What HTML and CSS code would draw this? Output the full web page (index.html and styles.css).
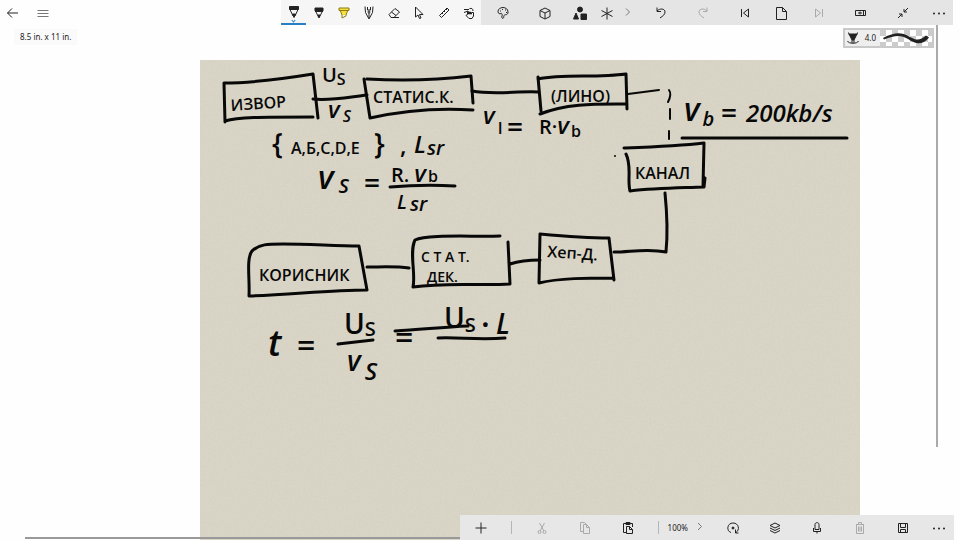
FILE: index.html
```html
<!DOCTYPE html>
<html lang="en">
<head>
<meta charset="utf-8">
<meta name="viewport" content="width=device-width, initial-scale=1">
<title>Whiteboard</title>
<link rel="stylesheet" href="styles.css">
</head>
<body>
<header class="topbar">
  <nav class="nav" aria-label="Document">
    <button class="btn" aria-label="Back"><svg viewBox="0 0 16 16"><path d="M13 8H2.500M7 3.500 2.500 8 7 12.500"/></svg></button>
    <button class="btn dim" aria-label="Menu"><svg viewBox="0 0 16 16"><path d="M2.500 5.500h11M2.500 8.500h11M2.500 11.500h11"/></svg></button>
  </nav>
  <div class="pens" role="toolbar" aria-label="Pens">
    <button class="pen active" aria-label="Pen"><svg viewBox="0 0 16 16"><path class="solid" d="M3.500 2.500h9v3h-9z"/><path d="m4 5.500 3 6.500h2l3-6.500"/><path class="solid" d="M6.500 10h3L8 13.500z"/></svg><span class="caret"></span></button>
    <button class="pen" aria-label="Pencil"><svg viewBox="0 0 16 16"><path class="solid" d="M4 3h8v3l-1 1-1-1-1 1-1-1-1 1-1-1-1 1-1-1z"/><path d="m5 7 2.500 5h1L11 7"/><path class="solid" d="M7 10h2l-1 3z"/></svg></button>
    <button class="pen" aria-label="Highlighter"><svg viewBox="0 0 16 16"><path class="yellow" d="M3 3h10v3H3zM4.500 6h7L10 10H6z"/><path class="gold" d="M3 3h10v2.500H3zM4.500 6 6 10v3l4-2v-1l1.500-4"/></svg></button>
    <button class="pen" aria-label="Fountain pen"><svg viewBox="0 0 16 16"><path d="M4 1.500l.500 6L8 14l3.500-6.500.500-6M6.500 2v3h3V2M8 8v5"/><circle cx="8" cy="7" r="1"/></svg></button>
    <button class="pen" aria-label="Eraser"><svg viewBox="0 0 16 16"><path d="m3 9.500 6-6 4.500 3.500-5.500 5.500H5zM5.500 7l4.500 3.500M7 12.500h6"/></svg></button>
    <button class="pen" aria-label="Select"><svg viewBox="0 0 16 16"><path d="m4.500 2 7.500 7.500H8.500l1.500 3.500-1.500.500L7 10l-2.500 2z"/></svg></button>
    <button class="pen" aria-label="Ruler"><svg viewBox="0 0 16 16"><path d="m3.500 10.500 7.500-7.500 2 2-7.500 7.500zM6 8l1 1M8 6l1 1M10 4l1 1"/></svg></button>
    <button class="pen" aria-label="Touch drawing"><svg viewBox="0 0 16 16"><path d="M3 4.500h5M3 7.500 7 6M8.500 3.500C11 3 12 4 12 6M6.500 9V6.500h1V9h1V7h1v2h1V7.500h2V11l-1.500 2.500h-3L5 10.500l1-.500z"/></svg></button>
  </div>
  <div class="actions" role="toolbar" aria-label="Insert and edit">
    <button class="btn w44" aria-label="Palette"><svg viewBox="0 0 16 16"><path d="M8 13.500c1.500-1 0-3 1.500-3.500S13 10 13 7c0-3-2.500-4.500-5-4.500S3 4 3 6.500 5 9 6 8.500s1.500 1 1 2.500 0 2 1 2.500z"/><path d="M5 6h1M7 4.500h1M10 5h1M11 7.500h1"/></svg></button>
    <button class="btn w40" aria-label="3D object"><svg viewBox="0 0 16 16"><path d="m8 3 5 2.500v6L8 14l-5-2.500v-6zM3 5.500 8 8l5-2.500M8 8v6"/></svg></button>
    <button class="btn w30" aria-label="Shapes"><svg viewBox="0 0 16 16"><circle class="solid" cx="8" cy="4.500" r="2.500"/><path class="solid" d="m4 8 2.500 6h-5zM9 9h5.500v5.500H9z"/></svg></button>
    <button class="btn w24" aria-label="Symbols"><svg viewBox="0 0 16 16"><path d="M8 2.500v12M2.500 5.500l11 6M13.500 5.500l-11 6"/></svg></button>
    <button class="btn w20 dim" aria-label="More tools"><svg viewBox="0 0 16 16"><path d="m5 3.500 3.500 3.500L5 10.500"/></svg></button>
    <button class="btn w44" aria-label="Undo"><svg viewBox="0 0 16 16"><path d="M4 2.500v4h4M4 6c3-3 8-2.500 8 1 0 2.500-2 4-5 6"/></svg></button>
    <button class="btn w40" aria-label="Redo" disabled><svg viewBox="0 0 16 16"><path d="M12 2.500v4H8M12 6C9 3 4 3.500 4 7c0 2.500 2 4 5 6"/></svg></button>
    <button class="btn w44" aria-label="Previous page"><svg viewBox="0 0 16 16"><path d="M4.500 4v8M11.500 4 6.500 8l5 4z"/></svg></button>
    <button class="btn w30" aria-label="New page"><svg viewBox="0 0 16 16"><path d="M2.500 2.500h6l4 4v8h-10zM8.500 2.500v4h4"/></svg></button>
    <button class="btn w44" aria-label="Next page" disabled><svg viewBox="0 0 16 16"><path d="M11.500 4v8M4.500 4l5 4-5 4z"/></svg></button>
    <button class="btn w40" aria-label="Split view"><svg viewBox="0 0 16 16"><path d="M2.500 5.500h10v5h-10zM10.500 5v5.500M5 8h4M7 6.500v3"/></svg></button>
    <button class="btn w44" aria-label="Exit full screen"><svg viewBox="0 0 16 16"><path d="M13 3 9 7M9 4v3h3M3 13l4-4M4 9h3v3"/></svg></button>
    <button class="btn w28" aria-label="More"><svg viewBox="0 0 16 16"><path class="dots" d="M3 8.500h0M8 8.500h0M13 8.500h0"/></svg></button>
  </div>
</header>

<main class="workspace">
  <span class="size-label">8.5 in. x 11 in.</span>
  <div class="preview">
    <svg class="nib" viewBox="0 0 16 16"><path class="solid" d="M4 4h8l-3 6H7z"/><path d="m3.500 2.500.500 2M12.500 2.500l-.500 2M7 10v3M9 10v3M2.500 11c1 3 10 3 11 0"/></svg>
    <span>4.0</span>
    <svg class="swatch" viewBox="0 0 52 16">
      <defs><pattern id="check" width="12" height="12" patternUnits="userSpaceOnUse"><path class="tile" d="M0 0h6v6H0zM6 6h6v6H6z"/></pattern></defs>
      <rect class="white" width="52" height="16"/><rect fill="url(#check)" width="52" height="16"/>
      <path class="solid" d="M3 8C15 2 21 2 29 6.500s11 4 17-1l3 2C42 16 35 14 28 9 20 4 14 6 4 9.500z"/>
    </svg>
  </div>

  <svg class="paper" viewBox="200 60 660 480" role="img" aria-label="Block diagram of a communication system">
    <defs>
      <filter id="grain" x="0" y="0" width="100%" height="100%">
        <feTurbulence type="fractalNoise" baseFrequency="0.5" numOctaves="2" seed="4"/>
        <feColorMatrix values="0 0 0 0 .4  0 0 0 0 .38  0 0 0 0 .3  .5 0 0 0 -.17"/>
      </filter>
    </defs>
    <rect class="sheet" x="200" y="60" width="660" height="480"/>
    <rect class="texture" x="200" y="60" width="660" height="480" filter="url(#grain)"/>

    <g class="ink">
      <path d="M224 83 225 122M224 83C251 83 282 79 313 74L318 118M225 121C238 117 260 117 313 117"/>
      <path d="M313 99C330 101 349 97 367 95M364 79l6 39M367 79C402 81 438 80 471 76l2 27M370 118C410 109 443 108 473 110"/>
      <path d="M472 91C493 95 517 91 538 92M538 77l3 34M538 79C563 74 596 78 626 74l1 35M540 114C567 103 597 104 627 104"/>
      <path class="fine" d="M628 94 659 90M669 90q3 4-1 12M670 109v10M669 131v8"/>
      <path d="M682 138H847M624 148C651 147 679 146 704 143l-1 44M626 154c6 12 1 26 4 37 26-3 48-3 74-4l1-9"/>
      <path d="M665 193C667 213 668 232 666 252 648 248 630 252 614 252"/>
      <path class="fine" d="M615 156h0"/>
      <path d="M390 187C414 185 436 185 455 186"/>
      <path d="M249 296C250 279 246 259 252 251c8-7 15-7 31-7 26 0 53 2 76 2l8 44c-37 0-79 5-118 6z"/>
      <path d="M367 267c14 0 29-1 42 1"/>
      <path d="M413 287c3-13-4-35 2-47 12-6 59-3 85-4M508 242l2 42c-31 2-62-2-97 3M510 264c9-3 19-4 30-4"/>
      <path d="M540 234l-1 49M540 234c22 2 45 4 69 4l5 42M539 283c20-5 49-5 74-5"/>
      <path d="M338 344 373 340M395 331C420 330 441 327 468 326M438 338c19-1 40 2 67 0"/>
    </g>

    <g class="hand">
      <text class="t16" x="231" y="111" transform="rotate(-4 231 111)">ИЗВОР</text>
      <text class="t20" x="322" y="82">U<tspan class="t16" dy="3">S</tspan></text>
      <text class="t24 slant" x="328" y="118">v<tspan class="t16" dx="3" dy="4">S</tspan></text>
      <text class="t16" x="373" y="103">СТАТИС.К.</text>
      <text class="t16" x="551" y="102">(ЛИНО)</text>
      <text class="t24 slant" x="483" y="124">v<tspan class="t16 upright" dx="3" dy="10">I</tspan></text>
      <text class="t28" x="507" y="137">=</text>
      <text class="t20" x="539" y="134">R·<tspan class="t24 slant">v</tspan><tspan class="t16" dx="2" dy="3">b</tspan></text>
      <text class="t28" x="272" y="154">{</text>
      <text class="t16" x="291" y="154">А,Б,С,D,Е</text>
      <text class="t28" x="374" y="154">}</text>
      <text class="t24" x="400" y="154">,</text>
      <text class="t24 slant" x="414" y="153">L<tspan class="t20" dx="1" dy="2">sr</tspan></text>
      <text class="t32 slant" x="318" y="189">v<tspan class="t20" dx="5" dy="4">S</tspan></text>
      <text class="t28" x="364" y="193">=</text>
      <text class="t20" x="391" y="182">R.<tspan class="t24 slant" dx="5">v</tspan><tspan class="t16" dx="2">b</tspan></text>
      <text class="t20 slant" x="397" y="209">L<tspan dx="3" dy="2">sr</tspan></text>
      <text class="t32 slant" x="684" y="121">v<tspan class="t20" dx="3" dy="5">b</tspan></text>
      <text class="t28" x="721" y="123">=</text>
      <text class="t24 slant" x="746" y="122">200kb/s</text>
      <text class="t16" x="635" y="179">КАНАЛ</text>
      <text class="t16" x="259" y="281">КОРИСНИК</text>
      <text class="t14" x="421" y="262">С Т А Т.</text>
      <text class="t14" x="427" y="282">ДЕК.</text>
      <text class="t16" x="547" y="257" transform="rotate(4 547 257)">Хеп-Д.</text>
      <text class="t36 slant" x="268" y="356">t</text>
      <text class="t32" x="297" y="357">=</text>
      <text class="t28" x="344" y="334">U<tspan class="t20" dy="2">S</tspan></text>
      <text class="t28 slant" x="347" y="371">v<tspan class="t24" dx="4" dy="9">S</tspan></text>
      <text class="t32" x="395" y="349">=</text>
      <text class="t28" x="444" y="328">U<tspan class="t20" dy="4">S</tspan></text>
      <text class="t32" x="481" y="336">·</text>
      <text class="t28 slant" x="496" y="334">L</text>
    </g>
  </svg>
  <span class="edge-right"></span>
  <span class="edge-bottom"></span>

  <footer class="bottombar" role="toolbar" aria-label="Page">
    <button class="btn w42" aria-label="Add"><svg viewBox="0 0 16 16"><path d="M8 2.500v11M2.500 8h11"/></svg></button>
    <span class="divider"></span>
    <button class="btn w42" aria-label="Cut" disabled><svg viewBox="0 0 16 16"><path d="m5.500 3 4.500 8M10.500 3 6 11"/><circle cx="5.500" cy="12" r="1.500"/><circle cx="10.500" cy="12" r="1.500"/></svg></button>
    <button class="btn w44" aria-label="Copy" disabled><svg viewBox="0 0 16 16"><path d="M6.500 11.500h-3v-9h4l2 2M6.500 4.500h3l3 3v6h-6zM9.500 4.500v3h3"/></svg></button>
    <button class="btn w42" aria-label="Paste"><svg viewBox="0 0 16 16"><path d="M6.500 12.500h-3v-9h9V7M6 3.500v-1h4v2H6zM6.500 6.500h3l3 3v4h-6zM9.500 6.500v3h3"/></svg></button>
    <span class="divider"></span>
    <span class="zoom">100%</span>
    <button class="btn w24 dim" aria-label="Zoom options"><svg viewBox="0 0 16 16"><path d="m6 3 3.500 3.500L6 10"/></svg></button>
    <button class="btn w42" aria-label="Rotate"><svg viewBox="0 0 16 16"><path d="M6 12.500C1 11 2 3 8 3s7 7 3 9.500M10.500 9.500v3.500h3"/><circle class="solid" cx="8" cy="8" r="1"/></svg></button>
    <button class="btn w42" aria-label="Layers"><svg viewBox="0 0 16 16"><path d="m8 3 5 2.500L8 8 3 5.500zM3 8l5 2.500L13 8M3 10.500 8 13l5-2.500"/></svg></button>
    <button class="btn w42" aria-label="Record"><svg viewBox="0 0 16 16"><path d="M6 4.500c0-2.500 4-2.500 4 0v5H6zM4.500 8v3.500h7V8M8 11.500v2"/></svg></button>
    <button class="btn w44" aria-label="Delete" disabled><svg viewBox="0 0 16 16"><path d="M4 4.500h8M6.500 4.500v-2h3v2M4.500 4.500v9h7v-9M6.500 6.500v5M8 6.500v5M9.500 6.500v5"/></svg></button>
    <button class="btn w42" aria-label="Save"><svg viewBox="0 0 16 16"><path d="M3.500 3.500h9v9h-9zM5.500 3.500v4h5v-4M5.500 12.500v-3h5v3"/></svg></button>
    <button class="btn w30" aria-label="More"><svg viewBox="0 0 16 16"><path class="dots" d="M3 8.500h0M8 8.500h0M13 8.500h0"/></svg></button>
  </footer>
</main>
</body>
</html>
```
FILE: styles.css
```css
* { box-sizing: border-box; }

body {
  margin: 0;
  min-height: 100vh;
  display: flex;
  flex-direction: column;
  background: #fefefe;
  color: #222;
  font-family: "Noto Sans", "Open Sans", sans-serif;
}

svg { display: block; fill: none; stroke: currentColor; stroke-width: 1; }
.solid { fill: currentColor; }

/* Toolbars */
.topbar { display: flex; padding-right: 7px; }
.nav { display: flex; gap: 5px; margin-right: auto; }
.pens { display: flex; background: #f6f6f6; }
.actions { display: flex; background: #e5e5e5; }

button {
  display: flex;
  align-items: center;
  justify-content: center;
  height: 25px;
  width: 25px;
  padding: 0;
  border: 0;
  background: none;
  color: #222;
  position: relative;
}
button svg { width: 16px; height: 16px; flex: none; }
button:disabled { color: #aaa; }
.dim { color: #777; }

.w20 { width: 20px; }
.w24 { width: 24px; }
.w28 { width: 28px; }
.w30 { width: 30px; }
.w40 { width: 40px; }
.w42 { width: 42px; }
.w44 { width: 44px; }

.pen.active { border-bottom: 2px solid #2a7fc4; }
.caret {
  position: absolute;
  bottom: 1px;
  width: 3px;
  height: 3px;
  border: solid #2a7fc4;
  border-width: 0 1px 1px 0;
  transform: rotate(45deg);
}
.yellow { fill: #f5e03c; stroke: none; }
.gold { stroke: #8a7a10; }
.dots { stroke-width: 2; stroke-linecap: round; }

/* Canvas */
.workspace { position: relative; flex: 1; padding: 35px 100px 0 200px; }
.paper { width: 100%; height: auto; color: #080808; }
.sheet { fill: #d9d5c7; stroke: none; }
.texture { stroke: none; opacity: .3; }
.ink { stroke-width: 3; stroke-linecap: round; stroke-linejoin: round; }
.fine { stroke-width: 2; }
.hand { fill: #080808; stroke: none; font-family: "Open Sans", "Noto Sans", sans-serif; font-weight: 600; }
.slant { font-style: italic; }
.upright { font-style: normal; }
.t14 { font-size: 14px; }
.t16 { font-size: 16px; }
.t20 { font-size: 20px; }
.t24 { font-size: 24px; }
.t28 { font-size: 28px; }
.t32 { font-size: 32px; }
.t36 { font-size: 36px; }

.size-label {
  position: absolute;
  top: 4px;
  left: 14px;
  padding: 0 6px;
  background: #fafafa;
  font-size: 8px;
  line-height: 16px;
}

.preview {
  position: absolute;
  top: 3px;
  right: 26px;
  display: flex;
  align-items: center;
  gap: 4px;
  border: 2px solid #c9c9c9;
  background: #eee;
  font-size: 8px;
  line-height: 16px;
}
.nib { width: 16px; height: 16px; }
.swatch { width: 52px; height: 16px; stroke: none; }
.white { fill: #fff; }
.tile { fill: #ccc; }

.edge-right { position: absolute; top: 0; right: 22px; bottom: 93px; width: 2px; background: #aaa; }
.edge-bottom { position: absolute; left: 25px; right: 0; bottom: 1px; height: 2px; background: #999; }

.bottombar {
  position: absolute;
  right: 6px;
  bottom: 0;
  display: flex;
  align-items: center;
  background: #e7e7e7;
}
.bottombar::after {
  content: "";
  position: absolute;
  left: 100%;
  bottom: 0;
  width: 6px;
  height: 25px;
  background: #fefefe;
}
.divider { width: 1px; height: 13px; margin: 0 9px; background: #b5b5b5; }
.zoom { font-size: 8px; line-height: 16px; }
```
